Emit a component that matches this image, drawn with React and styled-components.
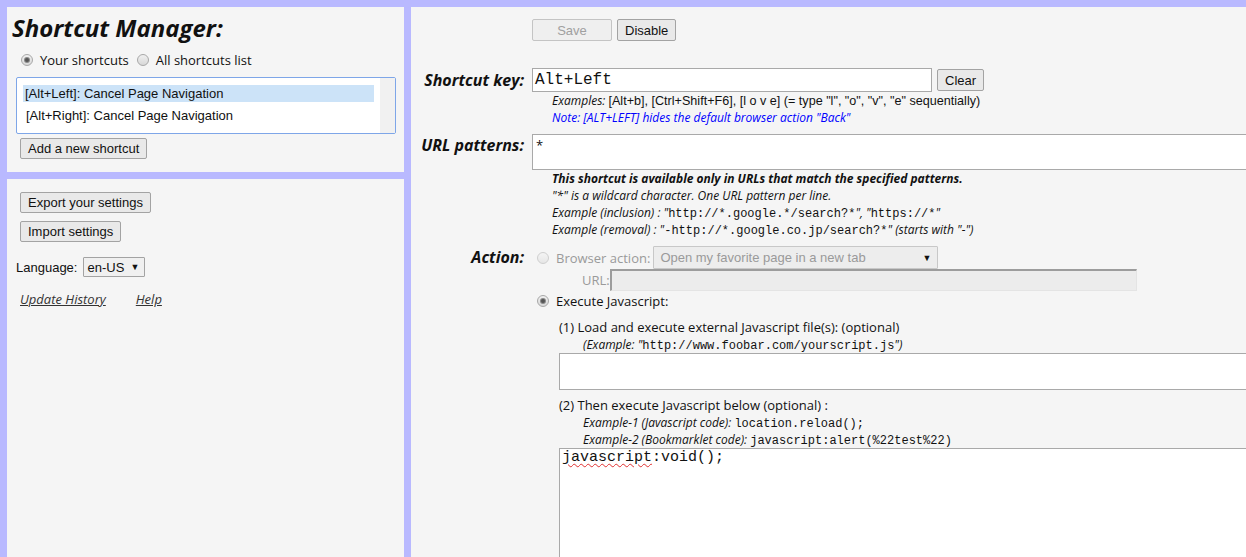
import React from 'react';
import styled, { createGlobalStyle } from 'styled-components';

const colors = {
  frame: '#b9b9ff',
  panel: '#f5f5f5',
  border: '#a9a9a9',
  text: '#111',
  grey: '#9a9a9a',
  link: '#333',
  note: '#0000ff',
  selected: '#cce3f8',
};

const sans = '"Open Sans", "Noto Sans", sans-serif';
const arial = '"Liberation Sans", Arial, sans-serif';
const mono = '"Liberation Mono", "Courier New", monospace';

const GlobalStyle = createGlobalStyle`
  html, body {
    margin: 0;
    padding: 0;
    height: 100%;
    overflow: hidden;
    background: ${colors.frame};
  }
  #root {
    height: 100%;
  }
`;

const Page = styled.div`
  display: flex;
  gap: 7px;
  padding: 7px 0 0 7px;
  height: 100%;
  box-sizing: border-box;
  overflow: hidden;
  color: ${colors.text};
`;

const LeftColumn = styled.div`
  display: flex;
  flex-direction: column;
  gap: 7px;
  width: 397px;
  flex-shrink: 0;
`;

const Panel = styled.div`
  background: ${colors.panel};
  padding: ${props => props.padding || '0'};
  flex: ${props => props.grow ? 1 : 'none'};
  display: flex;
  flex-direction: column;
  align-items: flex-start;
`;

const Title = styled.h1`
  margin: 0;
  font-family: ${sans};
  font-style: italic;
  font-weight: 700;
  font-size: 24px;
  line-height: 32px;
  color: #111;
`;

const RadioRow = styled.div`
  display: flex;
  align-items: center;
  height: 20px;
  margin: ${props => props.margin || '0'};
  font-family: ${sans};
  font-size: 13px;
`;

const Radio = styled.span`
  width: 12px;
  height: 12px;
  box-sizing: border-box;
  border-radius: 50%;
  border: 1px solid ${props => props.disabled ? '#cfcfcf' : '#a8a8a8'};
  background: ${props => props.disabled
    ? 'linear-gradient(#f4f4f4, #e6e6e6)'
    : 'linear-gradient(#f0f0f0, #d8d8d8)'};
  margin: 0 7px 0 0;
  flex-shrink: 0;
  display: flex;
  align-items: center;
  justify-content: center;

  &::after {
    content: '';
    display: ${props => props.checked ? 'block' : 'none'};
    width: 4px;
    height: 4px;
    border-radius: 50%;
    background: #555;
    box-shadow: 0 0 0 1px #8a8a8a;
  }
`;

const RadioLabel = styled.span`
  margin-right: 8px;
`;

const ListBox = styled.div`
  display: flex;
  width: 380px;
  height: 57px;
  box-sizing: border-box;
  margin: 7px 0 0 4px;
  border: 1px solid #7ea6e8;
  border-radius: 2px;
  background: #fff;
`;

const ListItems = styled.div`
  flex: 1;
  padding: 7px 6px 0 6px;
`;

const ListItem = styled.div`
  height: 17px;
  line-height: 17px;
  margin-bottom: 5px;
  padding-left: ${props => props.indent || '2px'};
  font-family: ${arial};
  font-size: 13px;
  background: ${props => props.selected ? colors.selected : 'transparent'};
`;

const ScrollTrack = styled.div`
  width: 15px;
  background: #f1f1f1;
`;

const Button = styled.button`
  height: ${props => props.height || '21px'};
  width: ${props => props.width || 'auto'};
  margin: ${props => props.margin || '0'};
  padding: 0 7px;
  box-sizing: border-box;
  font-family: ${arial};
  font-size: 13px;
  line-height: 17px;
  color: ${props => props.disabled ? '#a0a0a0' : '#111'};
  background: ${props => props.disabled ? '#efefef' : '#e9e9e9'};
  border: 1px solid ${props => props.disabled ? '#c4c4c4' : '#a3a3a3'};
  border-radius: 2px;
  flex-shrink: 0;
`;

const LangRow = styled.div`
  display: flex;
  align-items: center;
  gap: 6px;
  margin: 15px 0 0 9px;
  font-family: ${arial};
  font-size: 13px;
`;

const Select = styled.div`
  display: flex;
  align-items: center;
  justify-content: space-between;
  box-sizing: border-box;
  width: ${props => props.width};
  height: ${props => props.height};
  padding: ${props => props.pad || '0 6px'};
  white-space: nowrap;
  font-family: ${arial};
  font-size: 13px;
  color: ${props => props.disabled ? colors.grey : colors.text};
  background: ${props => props.disabled ? '#ededed' : '#f0f0f0'};
  border: 1px solid ${props => props.disabled ? '#c8c8c8' : '#a3a3a3'};
  border-radius: 1px;
  flex-shrink: 0;

  &::after {
    content: '▼';
    font-size: 9px;
    color: #111;
    margin-left: 4px;
  }
`;

const Links = styled.div`
  display: flex;
  gap: 30px;
  margin: 13px 0 0 13px;
  line-height: 18px;
`;

const Link = styled.a`
  font-family: ${sans};
  font-style: italic;
  font-size: 13px;
  color: ${colors.link};
  text-decoration: underline;
`;

const RightPanel = styled.div`
  width: 960px;
  flex-shrink: 0;
  background: ${colors.panel};
  padding-top: 12px;
  box-sizing: border-box;
`;

const Row = styled.div`
  display: flex;
  align-items: flex-start;
  margin-top: ${props => props.top || '0'};
`;

const Label = styled.div`
  width: 113px;
  margin-right: 8px;
  flex-shrink: 0;
  text-align: right;
  font-family: ${sans};
  font-style: italic;
  font-weight: 700;
  font-size: 16px;
  line-height: ${props => props.lh || '24px'};
  color: #111;
`;

const Field = styled.div`
  display: flex;
  flex-direction: column;
  flex: 1;
`;

const Inline = styled.div`
  display: flex;
  align-items: center;
  gap: 5px;
`;

const KeyInput = styled.div`
  width: 400px;
  height: 24px;
  box-sizing: border-box;
  padding: 0 2px;
  background: #fff;
  border: 1px solid ${colors.border};
  font-family: ${mono};
  font-size: 16px;
  line-height: 22px;
`;

const Help = styled.div`
  height: 17px;
  margin-left: ${props => props.indent || '20px'};
  font-family: ${sans};
  font-size: 12px;
  line-height: 17px;
  white-space: nowrap;
  color: ${props => props.color || '#111'};
  font-style: ${props => props.italic ? 'italic' : 'normal'};
  font-weight: ${props => props.bold ? 700 : 400};
`;

const Em = styled.i`
  font-family: ${sans};
`;

const Plain = styled.span`
  font-family: ${arial};
  font-style: normal;
  font-size: 12.6px;
  line-height: 1;
`;

const Code = styled.code`
  font-family: ${mono};
  font-style: normal;
  font-size: 12px;
  line-height: 1;
`;

const TextBox = styled.div`
  width: ${props => props.width || '760px'};
  height: ${props => props.height};
  box-sizing: border-box;
  padding: ${props => props.pad || '1px 3px'};
  background: #fff;
  border: 1px solid ${colors.border};
  font-family: ${props => props.mono ? mono : sans};
  font-size: ${props => props.mono ? '15px' : '13px'};
  line-height: 17px;
  flex-shrink: 0;
`;

const Squiggle = styled.span`
  text-decoration: underline wavy #e03030;
  text-decoration-thickness: 1px;
  text-underline-offset: 2px;
`;

const ActionRow = styled.div`
  display: flex;
  align-items: center;
  height: ${props => props.height || '23px'};
  padding-left: ${props => props.indent || '5px'};
  margin-top: ${props => props.top || '0'};
  font-family: ${sans};
  font-size: 13px;
  color: ${props => props.disabled ? colors.grey : colors.text};
`;

const UrlInput = styled.div`
  width: 527px;
  height: 22px;
  box-sizing: border-box;
  background: #ececec;
  border-top: 2px solid #9c9c9c;
  border-left: 2px solid #9c9c9c;
  border-right: 1px solid #e4e4e4;
  border-bottom: 1px solid #e4e4e4;
`;

const SubBlock = styled.div`
  margin: 9px 0 0 27px;
  display: flex;
  flex-direction: column;
`;

const Step = styled.div`
  height: 17px;
  font-family: ${sans};
  font-size: 13px;
  line-height: 17px;
  margin-top: ${props => props.top || '0'};
`;

export default function App() {
  return (
    <>
      <GlobalStyle />
      <Page>
        <LeftColumn>
          <Panel padding="5px 0 13px 5px">
            <Title>Shortcut Manager:</Title>
            <RadioRow margin="6px 0 0 9px">
              <Radio checked />
              <RadioLabel>Your shortcuts</RadioLabel>
              <Radio />
              <RadioLabel>All shortcuts list</RadioLabel>
            </RadioRow>
            <ListBox>
              <ListItems>
                <ListItem selected>[Alt+Left]: Cancel Page Navigation</ListItem>
                <ListItem indent="3px">[Alt+Right]: Cancel Page Navigation</ListItem>
              </ListItems>
              <ScrollTrack />
            </ListBox>
            <Button margin="4px 0 0 8px">Add a new shortcut</Button>
          </Panel>

          <Panel grow padding="13px 0 0 0">
            <Button margin="0 0 0 13px">Export your settings</Button>
            <Button margin="8px 0 0 13px">Import settings</Button>
            <LangRow>
              <span>Language:</span>
              <Select width="62px" height="20px" pad="0 5px 0 3px">en-US</Select>
            </LangRow>
            <Links>
              <Link>Update History</Link>
              <Link>Help</Link>
            </Links>
          </Panel>
        </LeftColumn>

        <RightPanel>
          <Row>
            <Label />
            <Inline>
              <Button disabled width="80px" height="22px">Save</Button>
              <Button height="22px">Disable</Button>
            </Inline>
          </Row>

          <Row top="27px">
            <Label>Shortcut key:</Label>
            <Field>
              <Inline>
                <KeyInput>Alt+Left</KeyInput>
                <Button height="22px">Clear</Button>
              </Inline>
              <Help>
                <Em>Examples:</Em>{' '}
                <Plain>[Alt+b], [Ctrl+Shift+F6], [l o v e] (= type "l", "o", "v", "e" sequentially)</Plain>
              </Help>
              <Help italic color={colors.note}>
                Note: [ALT+LEFT] hides the default browser action "Back"
              </Help>
            </Field>
          </Row>

          <Row top="8px">
            <Label lh="22px">URL patterns:</Label>
            <Field>
              <TextBox height="36px" width="780px" pad="2px 3px">*</TextBox>
              <Help italic bold>
                This shortcut is available only in URLs that match the specified patterns.
              </Help>
              <Help italic>"*" is a wildcard character. One URL pattern per line.</Help>
              <Help italic>
                Example (inclusion) : "<Code>http://*.google.*/search?*</Code>", "<Code>https://*</Code>"
              </Help>
              <Help italic>
                Example (removal) : "<Code>-http://*.google.co.jp/search?*</Code>" (starts with "-")
              </Help>
            </Field>
          </Row>

          <Row top="8px">
            <Label lh="23px">Action:</Label>
            <Field>
              <ActionRow disabled>
                <Radio disabled />
                <span>Browser action:</span>
                <Select disabled width="285px" height="23px" style={{ marginLeft: 3 }}>
                  Open my favorite page in a new tab
                </Select>
              </ActionRow>
              <ActionRow disabled height="22px" indent="50px">
                <span>URL:</span>
                <UrlInput />
              </ActionRow>
              <ActionRow height="18px" top="1px">
                <Radio checked />
                <span>Execute Javascript:</span>
              </ActionRow>

              <SubBlock>
                <Step>(1) Load and execute external Javascript file(s): (optional)</Step>
                <Help italic indent="24px">
                  (Example: "<Code>http://www.foobar.com/yourscript.js</Code>")
                </Help>
                <TextBox height="37px" width="720px" />
                <Step top="7px">(2) Then execute Javascript below (optional) :</Step>
                <Help italic indent="24px">
                  Example-1 (Javascript code): <Code>location.reload();</Code>
                </Help>
                <Help italic indent="24px">
                  Example-2 (Bookmarklet code): <Code>javascript:alert(%22test%22)</Code>
                </Help>
                <TextBox mono height="200px" width="720px" pad="0 2px">
                  <Squiggle>javascript</Squiggle>:void();
                </TextBox>
              </SubBlock>
            </Field>
          </Row>
        </RightPanel>
      </Page>
    </>
  );
}
